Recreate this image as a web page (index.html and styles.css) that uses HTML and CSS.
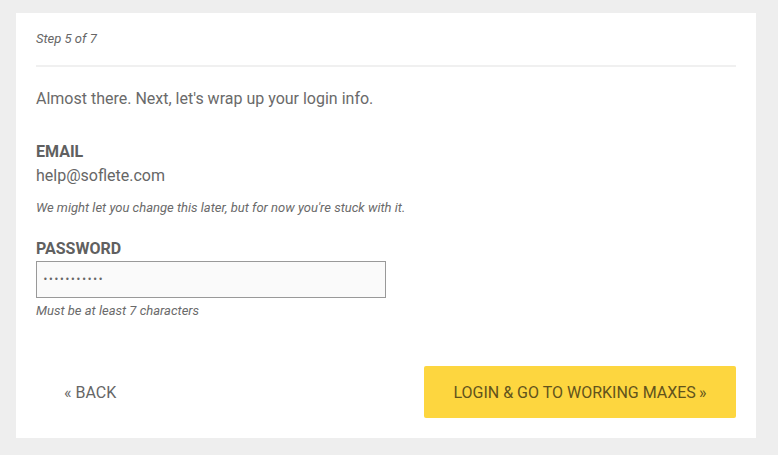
FILE: index.html
```html
<!DOCTYPE html>
<html>
<head>
<meta charset="utf-8">
<link rel="stylesheet" href="styles.css">
</head>
<body>
<div class="card">
  <div class="step">Step 5 of 7</div>
  <div class="rule"></div>
  <p class="intro">Almost there. Next, let's wrap up your login info.</p>
  <div class="field">
    <div class="label">EMAIL</div>
    <div class="value">help@soflete.com</div>
    <div class="note">We might let you change this later, but for now you're stuck with it.</div>
  </div>
  <div class="field pw">
    <div class="label">PASSWORD</div>
    <input class="input" type="password" value="password123">
    <div class="hint">Must be at least 7 characters</div>
  </div>
  <div class="actions">
    <button class="back">&laquo; BACK</button>
    <button class="primary">LOGIN &amp; GO TO WORKING MAXES&#8201;&raquo;</button>
  </div>
</div>
</body>
</html>
```
FILE: styles.css
```css
html, body {
  margin: 0;
  padding: 0;
  background: #eeeeee;
  font-family: Roboto, "Liberation Sans", sans-serif;
  color: #666;
}
.card {
  background: #fff;
  margin: 13px 0 0 16px;
  width: 740px;
  height: 425px;
  box-sizing: border-box;
  padding: 0 20px;
}
.step {
  font-style: italic;
  font-size: 13px;
  line-height: 14px;
  padding-top: 19px;
  color: #666;
}
.rule {
  height: 2px;
  background: #f0f0f0;
  margin-top: 19px;
}
.intro {
  margin: 23px 0 0;
  font-size: 16px;
  line-height: 18px;
  color: #6a6a6a;
}
.field { margin-top: 35px; }
.label {
  font-weight: bold;
  font-size: 16px;
  line-height: 18px;
  color: #606060;
}
.value {
  font-size: 16px;
  line-height: 18px;
  margin-top: 6px;
  color: #666;
}
.note {
  font-style: italic;
  font-size: 13px;
  line-height: 14px;
  margin-top: 16px;
  color: #6a6a6a;
}
.pw { margin-top: 25px; }
.input {
  display: block;
  box-sizing: border-box;
  width: 350px;
  height: 37px;
  margin-top: 3px;
  border: 1px solid #999;
  border-radius: 0;
  background: #fafafa;
  padding: 0 6px;
  font-size: 8px;
  color: #666;
  font-family: "DejaVu Sans", sans-serif;
  letter-spacing: 0.8px;
  outline: none;
}
.hint {
  font-style: italic;
  font-size: 13px;
  line-height: 14px;
  margin-top: 6px;
  color: #6a6a6a;
}
.actions {
  display: flex;
  justify-content: space-between;
  align-items: center;
  margin-top: 48px;
}
.back {
  background: none;
  border: none;
  font-family: Roboto, "Liberation Sans", sans-serif;
  font-size: 16px;
  color: #666;
  padding: 0 0 0 28px;
  height: 52px;
}
.primary {
  width: 312px;
  height: 52px;
  background: #fdd63f;
  border: none;
  border-radius: 2px;
  font-family: Roboto, "Liberation Sans", sans-serif;
  font-size: 16px;
  color: #62531c;
  padding: 0;
}
```
